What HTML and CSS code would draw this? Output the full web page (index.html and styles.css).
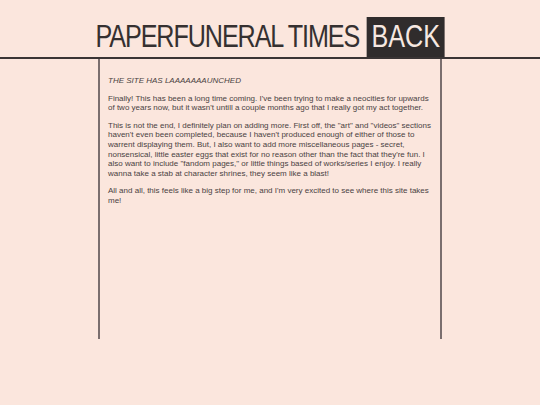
FILE: index.html
```html
<!DOCTYPE html>
<html lang="en">
<head>
<meta charset="utf-8">
<title>Paperfuneral Times</title>
<link rel="stylesheet" href="styles.css">
</head>
<body>
<header class="masthead">
  <div class="brand">
    <h1 class="title">PAPERFUNERAL TIMES</h1>
    <a class="back" href="#">BACK</a>
  </div>
</header>
<main class="page">
  <p class="headline">THE SITE HAS LAAAAAAAUNCHED</p>
  <p>Finally! This has been a long time coming. I've been trying to make a neocities for upwards of two years now, but it wasn't untill a couple months ago that I really got my act together.</p>
  <p>This is not the end, I definitely plan on adding more. First off, the "art" and "videos" sections haven't even been completed, because I haven't produced enough of either of those to warrent displaying them. But, I also want to add more miscellaneous pages - secret, nonsensical, little easter eggs that exist for no reason other than the fact that they're fun. I also want to include "fandom pages," or little things based of works/series I enjoy. I really wanna take a stab at character shrines, they seem like a blast!</p>
  <p>All and all, this feels like a big step for me, and I'm very excited to see where this site takes me!</p>
</main>
</body>
</html>
```
FILE: styles.css
```css
html, body {
  margin: 0;
  padding: 0;
  background: #fbe6dd;
}
body {
  font-family: "Liberation Sans", Arial, sans-serif;
  color: #4a4242;
}
.masthead {
  display: flex;
  justify-content: center;
  padding-top: 17px;
  border-bottom: 2px solid #3a3434;
}
.brand {
  display: flex;
  align-items: flex-end;
  gap: 9px;
  transform: scaleX(0.812);
  transform-origin: 50% 50%;
}
.title {
  margin: 0;
  font-weight: normal;
  font-size: 31px;
  line-height: 40px;
  color: #353030;
  letter-spacing: -1.35px;
}
.back {
  display: block;
  height: 40px;
  padding: 0 6px;
  background: #302c2c;
  color: #f6e8e1;
  text-decoration: none;
  font-size: 31px;
  line-height: 40px;
}
.page {
  box-sizing: border-box;
  width: 344px;
  height: 280px;
  margin: 0 auto;
  padding: 9px 5px 0 8px;
  border-left: 2px solid #7a6e6e;
  border-right: 2px solid #7a6e6e;
  font-size: 8px;
  line-height: 9.6px;
}
.page p {
  margin: 8px 0;
}
.headline {
  font-style: italic;
}
```
